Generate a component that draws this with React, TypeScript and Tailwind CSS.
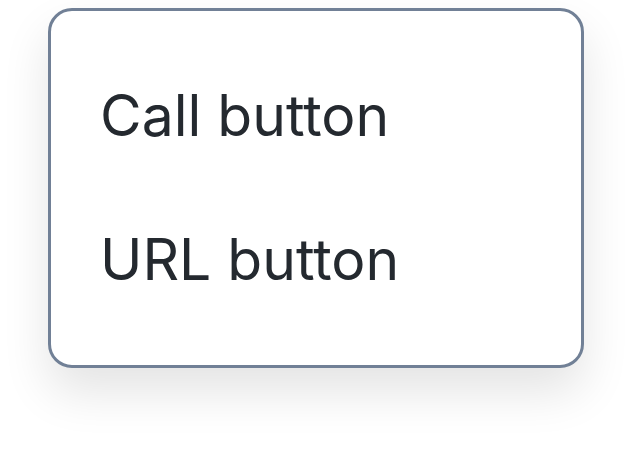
import React from "react";

export default function App() {
  return (
    <div className="w-[632px] h-[456px] bg-white pt-[8px] pl-[48px]" style={{ fontFamily: "Inter, 'Noto Sans', sans-serif" }}>
      <div className="w-[536px] h-[360px] rounded-[24px] border-[3px] border-[#718096] bg-white shadow-[0_24px_48px_rgba(0,0,0,0.11)] py-[32px]">
        <div className="h-[144px] flex items-center px-[49px] text-[57px] text-[#24292f] leading-none">Call button</div>
        <div className="h-[144px] flex items-center px-[49px] text-[57px] text-[#24292f] leading-none">URL button</div>
      </div>
    </div>
  );
}
